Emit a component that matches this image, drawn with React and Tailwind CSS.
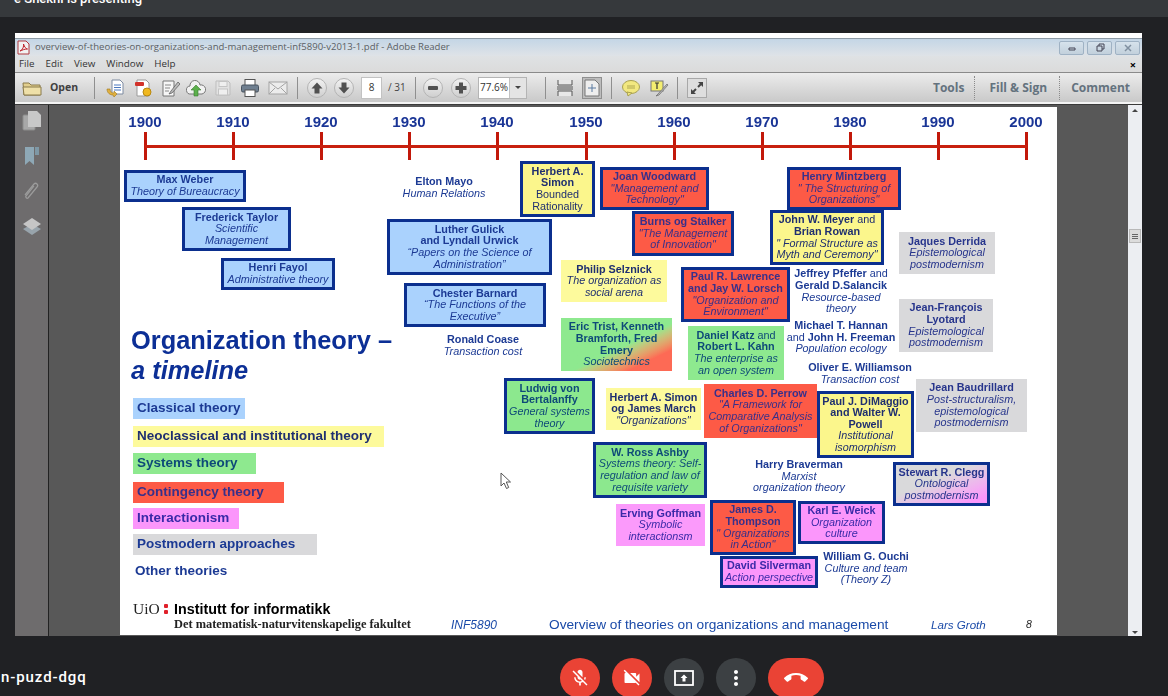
import React from "react";
import { MdMicOff, MdVideocamOff, MdMoreVert, MdCallEnd } from "react-icons/md";

const B = ({ children }) => <span className="block font-bold">{children}</span>;
const I = ({ children }) => <span className="block italic">{children}</span>;

const tone = {
  blue: "bg-[#aad2fd] border-[3px] border-[#0b2f8e] text-[#1c3a94]",
  yellow: "bg-[#fbf68c] border-[3px] border-[#0b2f8e] text-[#1f2f70]",
  red: "bg-[#fd5a46] border-[3px] border-[#0b2f8e] text-[#38308a]",
  green: "bg-[#8ce88e] border-[3px] border-[#0b2f8e] text-[#0e4a78]",
  pink: "bg-[#fb96fb] border-[3px] border-[#0b2f8e] text-[#3a2aa8]",
  softYellow: "bg-[#fdfa9c] text-[#1f2f70]",
  softRed: "bg-[#fd5a46] text-[#38308a]",
  softGreen: "bg-[#8ee98f] text-[#0e4a78]",
  softPink: "bg-[#fb9afb] text-[#3a2aa8]",
  softGray: "bg-[#d9d9db] text-[#27358c]",
  plain: "text-[#1c3a94]",
  mixed: "bg-gradient-to-br from-[#8ee98f] from-55% to-[#fd6a55] to-80% text-[#0e4a78]",
  clegg: "bg-gradient-to-br from-[#d9d9db] from-40% to-[#fb96fb] to-90% border-[3px] border-[#0b2f8e] text-[#27358c]",
};

function Node({ pos, c, children }) {
  return (
    <div className={`absolute flex flex-col items-center justify-center text-center text-[10.8px] leading-[11.6px] whitespace-nowrap ${tone[c]} ${pos}`}>
      {children}
    </div>
  );
}

const years = [
  ["1900", "left-[25px]"], ["1910", "left-[113px]"], ["1920", "left-[201px]"], ["1930", "left-[289px]"],
  ["1940", "left-[377px]"], ["1950", "left-[466px]"], ["1960", "left-[554px]"], ["1970", "left-[642px]"],
  ["1980", "left-[730px]"], ["1990", "left-[818px]"], ["2000", "left-[906px]"],
];

const legend = [
  ["Classical theory", "top-[291px] w-[112px] bg-[#aad2fd] text-[#1c3a94]"],
  ["Neoclassical and institutional theory", "top-[319px] w-[251px] bg-[#fdfa9c] text-[#1f2f70]"],
  ["Systems theory", "top-[346px] w-[123px] bg-[#8ee98f] text-[#0e4a78]"],
  ["Contingency theory", "top-[375px] w-[151px] bg-[#fd5a46] text-[#38308a]"],
  ["Interactionism", "top-[401px] w-[106px] bg-[#fb96fb] text-[#3a2aa8]"],
  ["Postmodern approaches", "top-[427px] w-[184px] bg-[#d9d9db] text-[#1c3a94]"],
];

function Slide() {
  return (
    <div className="relative w-[937px] h-[528px] bg-white shrink-0 font-['Liberation_Sans',sans-serif] overflow-hidden blur-[0.45px]">
      {years.map(([y, p]) => (
        <React.Fragment key={y}>
          <div className={`absolute top-[25px] w-[3px] h-[28px] -ml-[1px] bg-[#c2180a] ${p}`} />
          <div className={`absolute top-[6px] w-[50px] -ml-[25px] text-center text-[15px] leading-[18px] font-bold text-[#1a3596] ${p}`}>{y}</div>
        </React.Fragment>
      ))}
      <div className="absolute left-[25px] top-[38px] w-[882px] h-[3px] bg-[#c8200f]" />

      <Node pos="left-[4px] top-[63px] w-[122px] h-[32px]" c="blue"><B>Max Weber</B><I>Theory of Bureaucracy</I></Node>
      <Node pos="left-[62px] top-[100px] w-[109px] h-[44px]" c="blue"><B>Frederick Taylor</B><I>Scientific</I><I>Management</I></Node>
      <Node pos="left-[101px] top-[151px] w-[114px] h-[32px]" c="blue"><B>Henri Fayol</B><I>Administrative theory</I></Node>
      <Node pos="left-[264px] top-[69px] w-[120px] h-[23px]" c="plain"><B>Elton Mayo</B><I>Human Relations</I></Node>
      <Node pos="left-[267px] top-[112px] w-[165px] h-[56px]" c="blue"><B>Luther Gulick</B><B>and Lyndall Urwick</B><I>“Papers on the Science of</I><I>Administration”</I></Node>
      <Node pos="left-[284px] top-[176px] w-[142px] h-[44px]" c="blue"><B>Chester Barnard</B><I>“The Functions of the</I><I>Executive”</I></Node>
      <Node pos="left-[303px] top-[227px] w-[120px] h-[23px]" c="plain"><B>Ronald Coase</B><I>Transaction cost</I></Node>
      <Node pos="left-[400px] top-[54px] w-[75px] h-[56px]" c="yellow"><B>Herbert A.</B><B>Simon</B><span className="block">Bounded</span><span className="block">Rationality</span></Node>
      <Node pos="left-[480px] top-[60px] w-[109px] h-[43px]" c="red"><B>Joan Woodward</B><I>"Management and</I><I>Technology"</I></Node>
      <Node pos="left-[667px] top-[60px] w-[114px] h-[43px]" c="red"><B>Henry Mintzberg</B><I>" The Structuring of</I><I>Organizations"</I></Node>
      <Node pos="left-[512px] top-[104px] w-[102px] h-[45px]" c="red"><B>Burns og Stalker</B><I>"The Management</I><I>of Innovation"</I></Node>
      <Node pos="left-[650px] top-[103px] w-[114px] h-[55px]" c="yellow"><span className="block"><b>John W. Meyer</b> and</span><B>Brian Rowan</B><I>" Formal Structure as</I><I>Myth and Ceremony"</I></Node>
      <Node pos="left-[779px] top-[125px] w-[96px] h-[42px]" c="softGray"><B>Jaques Derrida</B><I>Epistemological</I><I>postmodernism</I></Node>
      <Node pos="left-[441px] top-[153px] w-[106px] h-[42px]" c="softYellow"><B>Philip Selznick</B><I>The organization as</I><I>social arena</I></Node>
      <Node pos="left-[441px] top-[211px] w-[111px] h-[53px]" c="mixed"><B>Eric Trist, Kenneth</B><B>Bramforth, Fred</B><B>Emery</B><I>Sociotechnics</I></Node>
      <Node pos="left-[561px] top-[160px] w-[109px] h-[55px]" c="red"><B>Paul R.  Lawrence</B><B>and Jay W. Lorsch</B><I>"Organization and</I><I>Environment"</I></Node>
      <Node pos="left-[568px] top-[219px] w-[96px] h-[54px]" c="softGreen"><span className="block"><b>Daniel Katz</b> and</span><B>Robert L. Kahn</B><I>The enterprise as</I><I>an open system</I></Node>
      <Node pos="left-[661px] top-[161px] w-[120px] h-[47px]" c="plain"><span className="block"><b>Jeffrey Pfeffer</b> and</span><B>Gerald D.Salancik</B><I>Resource-based</I><I>theory</I></Node>
      <Node pos="left-[661px] top-[213px] w-[120px] h-[35px]" c="plain"><B>Michael T. Hannan</B><span className="block">and <b>John H. Freeman</b></span><I>Population ecology</I></Node>
      <Node pos="left-[680px] top-[255px] w-[120px] h-[23px]" c="plain"><B>Oliver E. Williamson</B><I>Transaction cost</I></Node>
      <Node pos="left-[779px] top-[192px] w-[94px] h-[53px]" c="softGray"><B>Jean-François</B><B>Lyotard</B><I>Epistemological</I><I>postmodernism</I></Node>
      <Node pos="left-[796px] top-[272px] w-[111px] h-[53px]" c="softGray"><B>Jean Baudrillard</B><I>Post-structuralism,</I><I>epistemological</I><I>postmodernism</I></Node>
      <Node pos="left-[384px] top-[271px] w-[91px] h-[56px]" c="green"><B>Ludwig von</B><B>Bertalanffy</B><I>General systems</I><I>theory</I></Node>
      <Node pos="left-[486px] top-[281px] w-[95px] h-[42px]" c="softYellow"><B>Herbert A. Simon</B><B>og James March</B><I>"Organizations"</I></Node>
      <Node pos="left-[584px] top-[277px] w-[113px] h-[54px]" c="softRed"><B>Charles D. Perrow</B><I>"A Framework for</I><I>Comparative Analysis</I><I>of Organizations"</I></Node>
      <Node pos="left-[697px] top-[284px] w-[97px] h-[67px]" c="yellow"><B>Paul J. DiMaggio</B><B>and Walter W.</B><B>Powell</B><I>Institutional</I><I>isomorphism</I></Node>
      <Node pos="left-[473px] top-[335px] w-[114px] h-[56px]" c="green"><B>W. Ross Ashby</B><I>Systems theory: Self-</I><I>regulation and law of</I><I>requisite variety</I></Node>
      <Node pos="left-[619px] top-[352px] w-[120px] h-[35px]" c="plain"><B>Harry Braverman</B><I>Marxist</I><I>organization theory</I></Node>
      <Node pos="left-[773px] top-[355px] w-[97px] h-[44px]" c="clegg"><B>Stewart R. Clegg</B><I>Ontological</I><I>postmodernism</I></Node>
      <Node pos="left-[496px] top-[397px] w-[89px] h-[42px]" c="softPink"><B>Erving Goffman</B><I>Symbolic</I><I>interactionsm</I></Node>
      <Node pos="left-[590px] top-[393px] w-[86px] h-[55px]" c="red"><B>James D.</B><B>Thompson</B><I>" Organizations</I><I>in Action"</I></Node>
      <Node pos="left-[678px] top-[394px] w-[87px] h-[43px]" c="pink"><B>Karl E. Weick</B><I>Organization</I><I>culture</I></Node>
      <Node pos="left-[600px] top-[449px] w-[98px] h-[32px]" c="pink"><B>David Silverman</B><I>Action perspective</I></Node>
      <Node pos="left-[686px] top-[444px] w-[120px] h-[35px]" c="plain"><B>William G. Ouchi</B><I>Culture and team</I><I>(Theory Z)</I></Node>

      <div className="absolute left-[11px] top-[218px] text-[25.4px] leading-[30px] font-bold text-[#0c2f96]">
        <div>Organization theory –</div>
        <div className="italic">a timeline</div>
      </div>

      {legend.map(([t, cls]) => (
        <div key={t} className={`absolute left-[13px] h-[21px] pl-[4px] flex items-center text-[13.5px] font-bold whitespace-nowrap ${cls}`}>{t}</div>
      ))}
      <div className="absolute left-[15px] top-[456px] text-[13.5px] leading-[15px] font-bold text-[#1c3a94]">Other theories</div>

      <div className="absolute left-[13px] top-[493px] text-[15.5px] leading-[18px] font-['Liberation_Serif',serif] text-[#222]">UiO</div>
      <div className="absolute left-[44px] top-[497px] w-[4px] h-[4px] bg-[#e0202a] rounded-[1px]" />
      <div className="absolute left-[44px] top-[503px] w-[4px] h-[4px] bg-[#e0202a] rounded-[1px]" />
      <div className="absolute left-[54px] top-[493px] text-[14.3px] leading-[18px] font-bold text-black">Institutt for informatikk</div>
      <div className="absolute left-[54px] top-[510px] text-[12.4px] leading-[14px] font-bold font-['Liberation_Serif',serif] text-[#222] whitespace-nowrap">Det matematisk-naturvitenskapelige fakultet</div>
      <div className="absolute left-[331px] top-[511px] text-[12px] leading-[14px] italic text-[#1a4aa8]">INF5890</div>
      <div className="absolute left-[429px] top-[510px] text-[13.7px] leading-[16px] text-[#1a4aa8] whitespace-nowrap">Overview of theories on organizations and management</div>
      <div className="absolute left-[811px] top-[511px] text-[11.6px] leading-[14px] italic text-[#1a4aa8]">Lars Groth</div>
      <div className="absolute left-[906px] top-[510px] text-[10.5px] leading-[14px] italic text-[#222]">8</div>

      <svg className="absolute left-[380px] top-[365px]" width="12" height="18" viewBox="0 0 12 18">
        <path d="M1 1v13l3-3 2.5 5.5 2.2-1L6.3 10H10.5z" fill="#fff" stroke="#555" strokeWidth="1" />
      </svg>
    </div>
  );
}

const Sep = ({ cls }) => <div className={`w-px h-[22px] bg-[#8f8f8f] shrink-0 ${cls}`} />;

function Round({ cls, children }) {
  return (
    <div className={`w-[20px] h-[20px] rounded-full border border-[#b4b4b4] bg-gradient-to-b from-[#f2f2f2] to-[#cfcfcf] flex items-center justify-center shrink-0 ${cls}`}>
      <svg width="14" height="14" viewBox="0 0 14 14" fill="#505050">{children}</svg>
    </div>
  );
}

const Ico = ({ cls, children }) => (
  <svg className={`shrink-0 ${cls}`} width="20" height="20" viewBox="0 0 20 20">{children}</svg>
);

function Toolbar() {
  return (
    <div className="h-[30px] flex items-center bg-gradient-to-b from-[#ececec] to-[#c9c9c9] border-t border-[#8a8a8a] pl-[7px] pr-[12px] font-['Open_Sans',sans-serif]">
      <Ico cls="">
        <path d="M1 5h6l2 2h9v10H2z" fill="#e2cf8e" stroke="#8a7a4a" />
        <path d="M1 9h18v8H2z" fill="#efe0a8" stroke="#8a7a4a" />
      </Ico>
      <span className="ml-[8px] w-[27px] text-[10.5px] font-bold text-[#404040]">Open</span>
      <Sep cls="ml-[17px]" />
      <Ico cls="ml-[10px]">
        <path d="M7 2h8l3 3v11H7z" fill="#fff" stroke="#7d8aa0" />
        <path d="M9 7h7M9 9.5h7M9 12h7" stroke="#4a78c0" />
        <path d="M2 11c0 4 3 6 6 6l1 2 3-3-3-3v2c-2 0-4-1-4-4z" fill="#e0b040" stroke="#a07820" strokeWidth=".6" />
      </Ico>
      <Ico cls="ml-[8px]">
        <path d="M4 2h9l3 3v13H4z" fill="#fff" stroke="#999" />
        <rect x="2" y="4" width="9" height="4" rx="1" fill="#d2322a" />
        <circle cx="14" cy="14" r="4" fill="#f0b820" stroke="#b88810" />
      </Ico>
      <Ico cls="ml-[7px]">
        <path d="M3 3h11v15H3z" fill="#f6f6f6" stroke="#777" />
        <path d="M5 7h6M5 10h5M5 13h4" stroke="#888" />
        <path d="M18 4l-7 9-2 3 3-1 8-9z" fill="#bbb" stroke="#555" strokeWidth=".7" />
      </Ico>
      <Ico cls="ml-[6px]">
        <path d="M5 16a4 4 0 0 1-1-8 5 5 0 0 1 10-1 4.5 4.5 0 0 1 2 9z" fill="#f2f2f2" stroke="#777" />
        <path d="M10 7l5 5h-3v6H8v-6H5z" fill="#5cb04c" stroke="#3a7a30" strokeWidth=".6" />
      </Ico>
      <Ico cls="ml-[7px]">
        <path d="M3 3h12l2 2v12H3z" fill="#e2e2e2" stroke="#bdbdbd" />
        <rect x="6" y="3.500" width="8" height="5" fill="#efefef" stroke="#c4c4c4" />
        <rect x="5.500" y="11" width="9" height="6" fill="#efefef" stroke="#c4c4c4" />
      </Ico>
      <Ico cls="ml-[7px]">
        <rect x="5" y="1.500" width="10" height="6" fill="#fff" stroke="#555" />
        <rect x="1.500" y="7" width="17" height="7" rx="1.500" fill="#6f7f90" stroke="#47525e" />
        <rect x="5" y="12" width="10" height="6.500" fill="#fff" stroke="#555" />
      </Ico>
      <Ico cls="ml-[8px]">
        <rect x="1" y="4" width="18" height="12" fill="#ececec" stroke="#a4a4a4" />
        <path d="M1 4l9 7 9-7M1 16l6-6M19 16l-6-6" fill="none" stroke="#a4a4a4" />
      </Ico>
      <Sep cls="ml-[9px]" />
      <Round cls="ml-[9px]"><path d="M7 1.500l5.500 6H9.500v5h-5v-5H1.500z" /></Round>
      <Round cls="ml-[7px]"><path d="M7 12.500l-5.500-6H4.500v-5h5v5h3z" /></Round>
      <div className="ml-[7px] w-[21px] h-[22px] bg-white border border-[#c2c2c2] flex items-center justify-center text-[10px] text-[#333] shrink-0">8</div>
      <span className="ml-[6px] w-[19px] text-[10px] text-[#444] whitespace-nowrap">/ 31</span>
      <Sep cls="ml-[8px]" />
      <Round cls="ml-[7px]"><rect x="2" y="5" width="10" height="4" rx="1" /></Round>
      <Round cls="ml-[8px]"><path d="M5 1.500h4V5h3.500v4H9v3.500H5V9H1.500V5H5z" /></Round>
      <div className="ml-[7px] w-[49px] h-[22px] bg-white border border-[#b4b4b4] flex items-center text-[10px] text-[#333] shrink-0">
        <span className="flex-1 text-center">77.6%</span>
        <span className="w-[17px] h-full bg-[#e4e4e4] border-l border-[#c2c2c2] flex items-center justify-center">
          <span className="w-0 h-0 border-x-[3px] border-x-transparent border-t-[3px] border-t-[#444]" />
        </span>
      </div>
      <Sep cls="ml-[18px]" />
      <Ico cls="ml-[9px]">
        <path d="M3 2v5h14V2M3 18v-5h14v5M2 9h16M2 11h16" fill="#e8e8e8" stroke="#555" />
      </Ico>
      <div className="ml-[7px] w-[20px] h-[22px] border border-[#8f8f8f] bg-[#bdbdbd] flex items-center justify-center shrink-0">
        <svg width="16" height="18" viewBox="0 0 16 18">
          <path d="M1 1h10l4 4v12H1z" fill="#eee" stroke="#777" />
          <path d="M8 5v8M4 9h8" stroke="#5a7aa0" />
        </svg>
      </div>
      <Sep cls="ml-[9px]" />
      <Ico cls="ml-[9px]">
        <ellipse cx="10" cy="9" rx="8.500" ry="6.500" fill="#f2e880" stroke="#a8a050" />
        <path d="M6 14l1 4 4-3z" fill="#f2e880" stroke="#a8a050" />
        <path d="M6 8h8M6 10h8" stroke="#b0a850" />
      </Ico>
      <Ico cls="ml-[8px]">
        <rect x="2" y="3" width="12" height="10" fill="#f4ee70" stroke="#777" />
        <path d="M6 5h4M8 5v6" stroke="#333" strokeWidth="1.200" />
        <path d="M18 6l-9 10-2 2 3-1 9-10z" fill="#bbb" stroke="#666" strokeWidth=".7" />
      </Ico>
      <Sep cls="ml-[8px]" />
      <div className="ml-[9px] w-[20px] h-[20px] border border-[#a8a8a8] bg-[#dedede] flex items-center justify-center shrink-0">
        <svg width="16" height="16" viewBox="0 0 16 16" fill="#444">
          <path d="M9 2h5v5l-1.800-1.800-2.500 2.500-1.400-1.400 2.500-2.500zM7 14H2V9l1.800 1.800 2.500-2.500 1.400 1.400-2.500 2.500z" />
        </svg>
      </div>
      <div className="ml-auto flex items-center h-[24px] text-[12px] font-bold text-[#64727e] whitespace-nowrap">
        <span>Tools</span>
        <div className="ml-[10px] mr-[14px] h-full border-l border-dotted border-[#8a8a8a]" />
        <span>Fill &amp; Sign</span>
        <div className="ml-[12px] mr-[11px] h-full border-l border-dotted border-[#8a8a8a]" />
        <span>Comment</span>
      </div>
    </div>
  );
}

function AdobeWindow() {
  return (
    <div className="ml-[15px] mt-[16px] w-[1127px] h-[603px] flex flex-col overflow-hidden shrink-0">
      <div className="h-[5px] bg-white" />
      <div className="h-[18px] flex items-center bg-gradient-to-b from-[#c4d6e6] to-[#dfe3e7] border-t border-[#8d9aa5] pl-[1px] font-['Open_Sans',sans-serif]">
        <svg width="15" height="15" viewBox="0 0 15 15" className="shrink-0">
          <path d="M2 1h8l3 3v10H2z" fill="#f2f2f2" stroke="#b03a40" />
          <path d="M4 11c3-1 4-5 3.500-7 1 3 2 4.500 4 5-3 0-5 1-7.500 2z" fill="none" stroke="#c02028" />
        </svg>
        <span className="ml-[4px] text-[9.56px] text-[#5a5f64] whitespace-nowrap">overview-of-theories-on-organizations-and-management-inf5890-v2013-1.pdf - Adobe Reader</span>
        <div className="ml-auto mr-[2px] flex gap-[3px]">
          {[
            <path key="a" d="M3 6h6v2H3z" fill="none" stroke="#445" />,
            <path key="b" d="M3 4h5v5H3zM5 4V2h5v5H8" fill="none" stroke="#445" />,
            <path key="c" d="M3 3l6 6M9 3l-6 6" stroke="#8090a0" strokeWidth="1.500" />,
          ].map((p) => (
            <div key={p.key} className="w-[25px] h-[14px] border border-[#9fb2c4] rounded-[2px] bg-gradient-to-b from-[#d6e2ec] to-[#c2d0dc] flex items-center justify-center">
              <svg width="12" height="12" viewBox="0 0 12 12">{p}</svg>
            </div>
          ))}
        </div>
      </div>
      <div className="h-[16px] flex items-center justify-between bg-gradient-to-b from-[#dfe2e4] to-[#dbdbdb] pl-[4px] pr-[6px] text-[9.8px] text-[#333] font-['Open_Sans',sans-serif]">
        <div className="flex gap-[11px]">
          <span>File</span><span>Edit</span><span>View</span><span>Window</span><span>Help</span>
        </div>
        <span className="text-[11px] font-bold text-black leading-none">×</span>
      </div>
      <Toolbar />
      <div className="h-[3px] bg-[#f4f4f4] border-b border-[#3a3a3a]" />
      <div className="flex-1 min-h-0 flex">
        <div className="w-[34px] bg-[#6e6c6d] border-r-[1px] border-[#222] shrink-0 flex flex-col items-center gap-[13px] pt-[5px]">
          <svg width="20" height="22" viewBox="0 0 20 22">
            <rect x="1" y="5" width="12" height="15" rx="1" fill="#a8a8a8" stroke="#8c8c8c" />
            <path d="M6 1h9l4 4v12H6z" fill="#c8c8c8" />
          </svg>
          <svg width="16" height="22" viewBox="0 0 16 22">
            <path d="M1 2h9v18l-4.500-4L1 20z" fill="#8ea8b6" />
            <path d="M11 2h4v8h-4z" fill="#7e98a6" />
          </svg>
          <svg width="20" height="22" viewBox="0 0 20 22">
            <path d="M3 15l9-11c2-2 5 1 3 3L6 18c-1 1-3-1-2-2l8-10" fill="none" stroke="#9c9c9c" strokeWidth="1.200" />
          </svg>
          <svg className="mt-[2px]" width="20" height="20" viewBox="0 0 20 20">
            <path d="M1 12l9-5 9 5-9 6z" fill="#98a4ac" />
            <path d="M1 7l9-6 9 6-9 6z" fill="#c6c6c6" />
          </svg>
        </div>
        <div className="flex-1 bg-[#585858] flex pl-[71px]">
          <div className="pt-[2px]"><Slide /></div>
        </div>
        <div className="w-[14px] bg-[#eceef2] shrink-0 flex flex-col items-center pt-[4px]">
          <span className="w-0 h-0 border-x-[3px] border-x-transparent border-b-[3px] border-b-[#444]" />
          <div className="mt-[117px] w-[12px] h-[14px] bg-[#dcdcdc] border border-[#b8b8b8] flex flex-col items-center justify-center gap-[1px]">
            <span className="w-[6px] h-px bg-[#666]" /><span className="w-[6px] h-px bg-[#666]" /><span className="w-[6px] h-px bg-[#666]" />
          </div>
          <span className="mt-auto mb-[2px] w-0 h-0 border-x-[3px] border-x-transparent border-t-[3px] border-t-[#444]" />
        </div>
      </div>
    </div>
  );
}

const round = "w-[40px] h-[40px] rounded-full flex items-center justify-center text-white shrink-0";

export default function App() {
  return (
    <div className="w-[1168px] h-[696px] bg-[#202124] flex flex-col overflow-hidden font-['Roboto',sans-serif]">
      <div className="h-[17px] bg-[#36393c] shrink-0 overflow-hidden">
        <div className="w-[142px] flex justify-end -mt-[9px] text-[13px] leading-[16px] font-medium text-white whitespace-nowrap">e Shekhi is presenting</div>
      </div>
      <AdobeWindow />
      <div className="relative flex-1 flex items-start pl-[560px] pt-[22px] gap-[12px]">
        <div className={`${round} bg-[#ea4335]`}><MdMicOff size={20} /></div>
        <div className={`${round} bg-[#ea4335]`}><MdVideocamOff size={20} /></div>
        <div className={`${round} bg-[#3c4043]`}>
          <svg width="24" height="24" viewBox="0 0 24 24" fill="none">
            <rect x="3" y="5" width="18" height="14" stroke="#fff" strokeWidth="1.800" />
            <path d="M12 8.500l3.500 3.500h-2v3.500h-3V12h-2z" fill="#fff" />
          </svg>
        </div>
        <div className={`${round} bg-[#3c4043]`}><MdMoreVert size={24} /></div>
        <div className="w-[56px] h-[40px] rounded-full bg-[#ea4335] flex items-center justify-center text-white shrink-0"><MdCallEnd size={24} /></div>
        <div className="absolute left-0 top-[32px] -ml-[8px] text-[15px] leading-[18px] font-medium tracking-[0.9px] text-white whitespace-nowrap">an-puzd-dgq</div>
      </div>
    </div>
  );
}
